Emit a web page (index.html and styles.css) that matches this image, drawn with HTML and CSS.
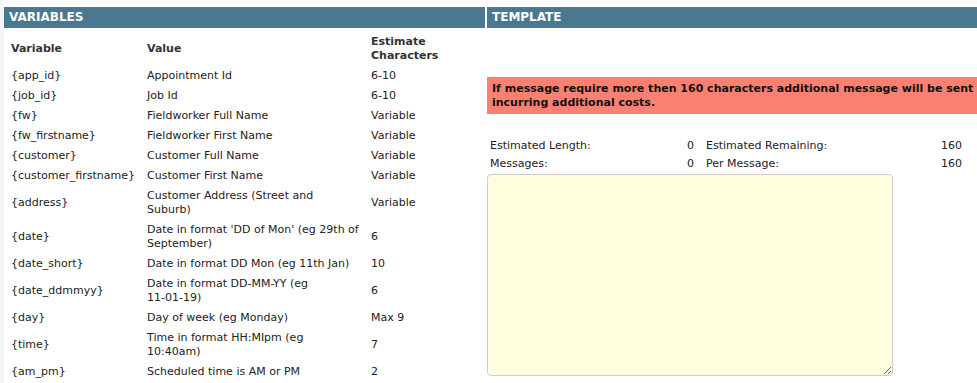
FILE: index.html
```html
<!DOCTYPE HTML>
<html lang="en">

<head>
    <meta charset="utf-8">
    <title>SMS Template</title>
    <link rel="stylesheet" href="styles.css">
</head>

<body>
    <div class="page">
        <!-- Variables list -->
        <section class="panel panel-vars">
            <h2 class="panel-title">VARIABLES</h2>
            <table class="var-table">
                <thead>
                    <tr>
                        <th class="col-var">Variable</th>
                        <th class="col-value">Value</th>
                        <th class="col-est">Estimate Characters</th>
                    </tr>
                </thead>
                <tbody>
                    <tr><td>{app_id}</td><td>Appointment Id</td><td>6-10</td></tr>
                    <tr><td>{job_id}</td><td>Job Id</td><td>6-10</td></tr>
                    <tr><td>{fw}</td><td>Fieldworker Full Name</td><td>Variable</td></tr>
                    <tr><td>{fw_firstname}</td><td>Fieldworker First Name</td><td>Variable</td></tr>
                    <tr><td>{customer}</td><td>Customer Full Name</td><td>Variable</td></tr>
                    <tr><td>{customer_firstname}</td><td>Customer First Name</td><td>Variable</td></tr>
                    <tr><td>{address}</td><td>Customer Address (Street and Suburb)</td><td>Variable</td></tr>
                    <tr><td>{date}</td><td>Date in format 'DD of Mon' (eg 29th of September)</td><td>6</td></tr>
                    <tr><td>{date_short}</td><td>Date in format DD Mon (eg 11th Jan)</td><td>10</td></tr>
                    <tr><td>{date_ddmmyy}</td><td>Date in format DD-MM-YY (eg <span class="nowrap">11-01-19)</span></td><td>6</td></tr>
                    <tr><td>{day}</td><td>Day of week (eg Monday)</td><td>Max 9</td></tr>
                    <tr><td>{time}</td><td>Time in format HH:MIpm (eg 10:40am)</td><td>7</td></tr>
                    <tr><td>{am_pm}</td><td>Scheduled time is AM or PM</td><td>2</td></tr>
                </tbody>
            </table>
        </section>

        <!-- Template editor -->
        <section class="panel panel-template">
            <h2 class="panel-title">TEMPLATE</h2>
            <div class="notice">If message require more then 160 characters additional message will be sent incurring additional costs.</div>
            <div class="stats">
                <span>Estimated Length:</span>
                <span class="num" id="estLength">0</span>
                <span>Estimated Remaining:</span>
                <span class="num" id="estRemaining">160</span>
                <span>Messages:</span>
                <span class="num" id="msgCount">0</span>
                <span>Per Message:</span>
                <span class="num" id="perMessage">160</span>
            </div>
            <textarea class="template-input" name="template"></textarea>
        </section>
    </div>
</body>

</html>
```

FILE: styles.css
```css
body {
    margin: 0;
    background-color: #f6f6f6;
    font-family: "DejaVu Sans", Verdana, sans-serif;
    font-size: 11px;
    color: #222;
}

.page {
    display: flex;
    gap: 2px;
    margin-left: 4px;
    padding-top: 7px;
    background-color: #fff;
    min-height: 376px;
}

.panel-vars {
    width: 481px;
    flex-shrink: 0;
}

.panel-template {
    flex: 1;
}

.panel-title {
    margin: 0;
    height: 21px;
    line-height: 21px;
    padding: 0 5px;
    background-color: #4a7891;
    color: #fff;
    font-size: 12px;
    font-weight: bold;
}

/* Variables table */
.var-table {
    border-collapse: collapse;
    table-layout: fixed;
    margin: 4px 0 0 4px;
}

.var-table th,
.var-table td {
    padding: 3px 8px 3px 3px;
    line-height: 14px;
    text-align: left;
    vertical-align: middle;
}

.var-table th {
    color: #333;
    font-weight: bold;
}

.col-var {
    width: 125px;
}

.col-value {
    width: 213px;
}

.col-est {
    width: 80px;
}

.nowrap {
    white-space: nowrap;
}

/* Template side */
.notice {
    margin-top: 49px;
    padding: 5px 0 4px 5px;
    background-color: #fa8072;
    color: #111;
    font-weight: bold;
    line-height: 14px;
}

.stats {
    display: grid;
    grid-template-columns: 142px 62px 206px 62px;
    margin-top: 23px;
    padding-left: 3px;
    line-height: 18px;
}

.stats span:nth-child(3),
.stats span:nth-child(7) {
    padding-left: 12px;
}

.stats .num {
    text-align: right;
}

.template-input {
    display: block;
    box-sizing: border-box;
    width: 406px;
    height: 202px;
    margin-top: 1px;
    background-color: #ffffe0;
    border: 1px solid #ccc;
    border-radius: 4px;
    font-family: "DejaVu Sans", Verdana, sans-serif;
    font-size: 11px;
}
```
